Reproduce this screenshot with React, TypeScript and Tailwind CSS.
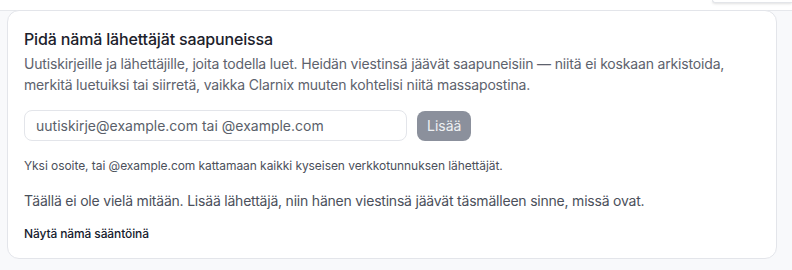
import React from 'react';

export default function App() {
  return (
    <main className="min-h-[270px] bg-[#f8f9fb] font-['Inter',sans-serif] text-[#1f2430]">
      {/* strip above (end of previous section) */}
      <div className="h-[11px] bg-white border-b border-[#e6e8ec] flex justify-end">
        <div className="w-[80px] h-[3px] bg-white border-b border-l border-[#e3e5e9] rounded-bl-md shadow-sm" />
      </div>

      <section className="ml-[7px] w-[770px] -mt-px bg-white border border-[#e3e5ea] rounded-xl px-4 pt-4 pb-4">
        <h2 className="text-[16px] leading-6 font-medium text-[#1c212b] tracking-[-0.01em]">
          Pidä nämä lähettäjät saapuneissa
        </h2>
        <p className="mt-[2px] text-[14px] leading-[21px] text-[#5d626d] tracking-[-0.012em]">
          Uutiskirjeille ja lähettäjille, joita todella luet. Heidän viestinsä jäävät saapuneisiin — niitä ei koskaan arkistoida, merkitä luetuiksi tai siirretä, vaikka Clarnix muuten kohtelisi niitä massapostina.
        </p>

        <div className="mt-[15px] flex items-center gap-[10px]">
          <input
            type="text"
            placeholder="uutiskirje@example.com tai @example.com"
            className="w-[383px] h-[31px] rounded-lg border border-[#e3e5ea] bg-white px-[11px] text-[14px] text-[#1f2430] placeholder:text-[#5a5f6a] outline-none"
          />
          <button className="h-[30px] px-[10px] rounded-lg bg-[#8b909c] text-[14px] text-[#eef0f3]">
            Lisää
          </button>
        </div>

        <p className="mt-[17px] text-[12px] leading-4 text-[#4b505b] tracking-[-0.005em]">
          Yksi osoite, tai @example.com kattamaan kaikki kyseisen verkkotunnuksen lähettäjät.
        </p>

        <p className="mt-[17px] text-[14px] leading-5 text-[#4b505b] tracking-[-0.015em]">
          Täällä ei ole vielä mitään. Lisää lähettäjä, niin hänen viestinsä jäävät täsmälleen sinne, missä ovat.
        </p>

        <button className="mt-[15px] block text-[12px] leading-4 font-medium text-[#161b2e] tracking-[-0.01em]">
          Näytä nämä sääntöinä
        </button>
      </section>
    </main>
  );
}
